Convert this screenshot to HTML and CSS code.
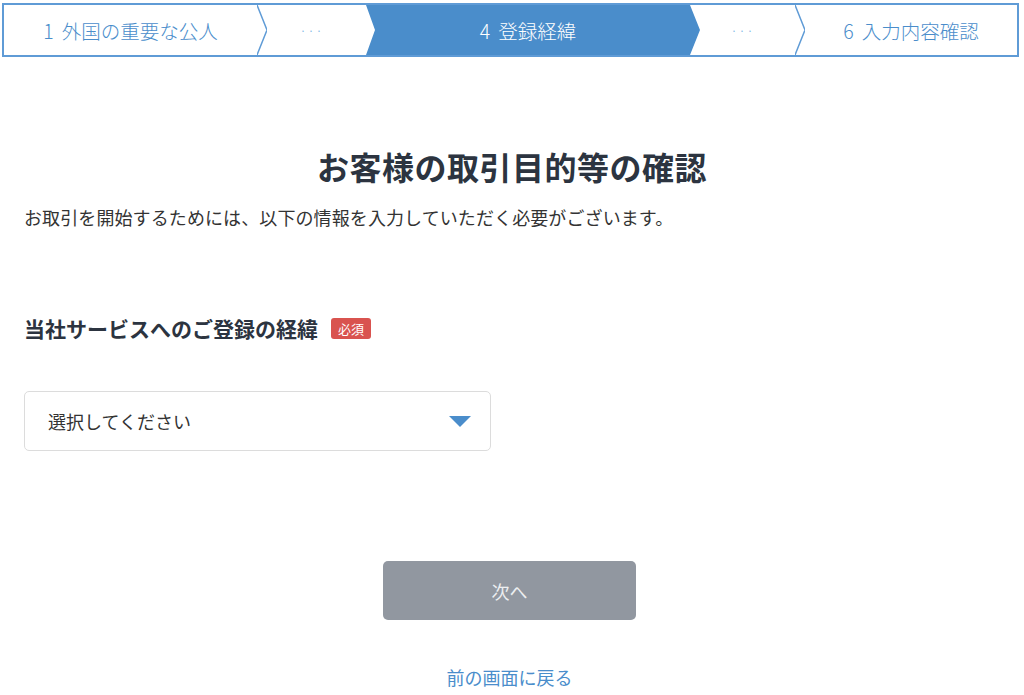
FILE: index.html
```html
<!DOCTYPE html>
<html lang="ja">
  <head>
    <meta charset="UTF-8" />
    <meta name="viewport" content="width=device-width, initial-scale=1.0" />
    <title>お客様の取引目的等の確認</title>
    <link rel="stylesheet" href="styles.css">
  </head>
  <body>
    <!-- ステップ表示 -->
    <nav class="steps">
      <div class="step step-first">1 外国の重要な公人</div>
      <svg class="step-sep" width="10" height="50" viewBox="0 0 10 50" preserveAspectRatio="none">
        <polyline points="0,0 10,25 0,50" fill="none" stroke="#5f9bd6" stroke-width="1.5" />
      </svg>
      <div class="step step-skip step-skip-a">&middot;&middot;&middot;</div>
      <div class="step step-active">4 登録経緯</div>
      <div class="step step-skip step-skip-b">&middot;&middot;&middot;</div>
      <svg class="step-sep" width="10" height="50" viewBox="0 0 10 50" preserveAspectRatio="none">
        <polyline points="0,0 10,25 0,50" fill="none" stroke="#5f9bd6" stroke-width="1.5" />
      </svg>
      <div class="step step-last">6 入力内容確認</div>
    </nav>

    <main class="content">
      <h1 class="page-title">お客様の取引目的等の確認</h1>
      <p class="lead">お取引を開始するためには、以下の情報を入力していただく必要がございます。</p>

      <div class="field">
        <h2 class="field-label">当社サービスへのご登録の経緯 <span class="badge">必須</span></h2>
        <div class="select-box">
          <span>選択してください</span>
          <svg width="22" height="11" viewBox="0 0 22 11">
            <polygon points="0,0 22,0 11,11" fill="#4a8dcb" />
          </svg>
        </div>
      </div>

      <div class="actions">
        <button class="btn-next" type="button" disabled>次へ</button>
        <a class="back-link" href="#">前の画面に戻る</a>
      </div>
    </main>
  </body>
</html>
```

FILE: styles.css
```css
body {
  margin: 0;
  font-family: "Noto Sans CJK JP", "Noto Sans", sans-serif;
  color: #2c3440;
  background: #fff;
}

/* ステップ表示 */
.steps {
  display: flex;
  height: 50px;
  margin: 3px 5px 0 2px;
  border: 2px solid #5f9bd6;
}
.step {
  display: flex;
  align-items: center;
  justify-content: center;
  font-size: 19.5px;
  font-weight: 300;
  word-spacing: 4px;
  color: #4a8dcb;
  white-space: nowrap;
}
.step-first {
  width: 253px;
}
.step-sep {
  flex: none;
  display: block;
}
.step-skip {
  font-size: 13px;
  color: #7ab6e6;
  letter-spacing: 1px;
}
.step-skip-a {
  width: 89px;
  padding-right: 10px;
}
.step-active {
  width: 324px;
  padding-right: 10px;
  background: #4a8dcb;
  color: #fff;
  clip-path: polygon(0 0, 324px 0, 100% 50%, 324px 100%, 0 100%, 9px 50%);
}
.step-skip-b {
  width: 105px;
  margin-left: -10px;
}
.step-last {
  flex: 1;
}

/* 本文 */
.content {
  padding: 0 24px;
}
.page-title {
  margin: 87px 0 0;
  font-size: 32px;
  line-height: 45px;
  font-weight: 700;
  text-align: center;
  letter-spacing: 0.5px;
}
.lead {
  margin: 15px 0 0;
  font-size: 18px;
  line-height: 27px;
  color: #333;
  letter-spacing: 0.1px;
}

.field-label {
  display: flex;
  align-items: center;
  margin: 82px 0 0;
  font-size: 21px;
  line-height: 30px;
  font-weight: 700;
}
.badge {
  display: inline-block;
  margin-left: 13px;
  padding: 0 7px;
  height: 21px;
  line-height: 21px;
  font-size: 13px;
  font-weight: 400;
  color: #fff;
  background: #d9534f;
  border-radius: 3px;
}
.select-box {
  display: flex;
  align-items: center;
  justify-content: space-between;
  box-sizing: border-box;
  width: 467px;
  height: 60px;
  margin-top: 48px;
  padding: 0 19px 0 23px;
  border: 1px solid #dcdcdc;
  border-radius: 5px;
  font-size: 18px;
  color: #333;
}

.actions {
  display: flex;
  flex-direction: column;
  align-items: center;
}
.btn-next {
  width: 253px;
  height: 59px;
  margin-top: 110px;
  margin-right: 5px;
  border: none;
  border-radius: 5px;
  background: #9197a0;
  color: #eceef0;
  font-family: inherit;
  font-size: 18px;
}
.back-link {
  margin-top: 44px;
  margin-right: 5px;
  font-size: 18px;
  line-height: 27px;
  color: #4a8dcb;
  text-decoration: none;
}
```
